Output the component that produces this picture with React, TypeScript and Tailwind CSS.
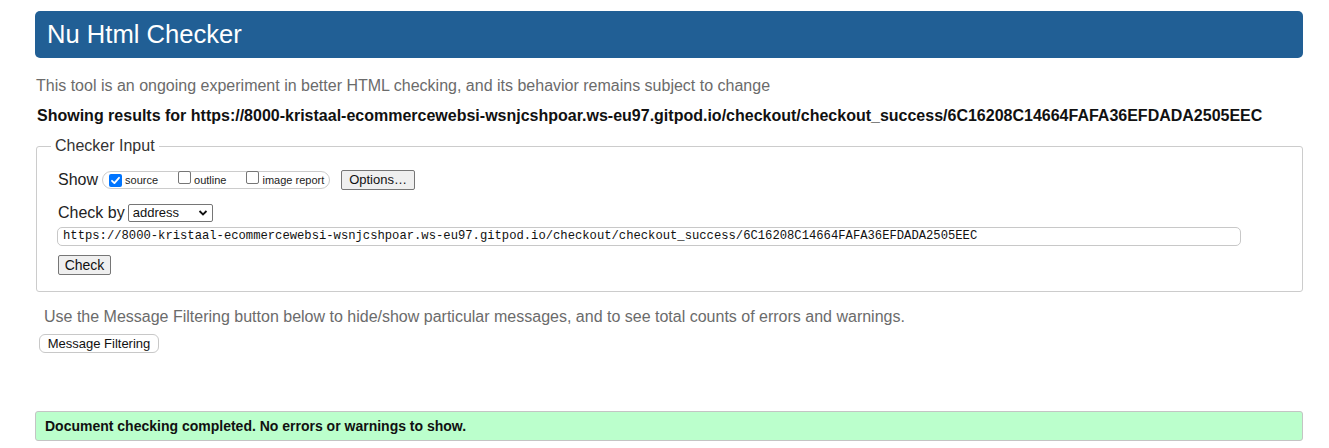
import React from "react";

const URL =
  "https://8000-kristaal-ecommercewebsi-wsnjcshpoar.ws-eu97.gitpod.io/checkout/checkout_success/6C16208C14664FAFA36EFDADA2505EEC";

function Box({ checked }: { checked?: boolean }) {
  if (checked) {
    return (
      <span className="inline-flex h-[13px] w-[13px] items-center justify-center rounded-[2px] bg-[#0075ff]">
        <svg width="11" height="11" viewBox="0 0 11 11">
          <path d="M2 5.8 L4.4 8.1 L9 2.8" fill="none" stroke="#fff" strokeWidth="1.8" strokeLinecap="round" strokeLinejoin="round" />
        </svg>
      </span>
    );
  }
  return <span className="inline-block h-[13px] w-[13px] rounded-[2px] border border-[#767676] bg-white" />;
}

export default function App() {
  return (
    <div className="min-h-[448px] bg-white font-['Liberation_Sans',Arial,sans-serif] text-[#222]">
      <div className="ml-[35px] w-[1268px] pt-[11px]">
        <div className="flex h-[47px] items-center rounded-[5px] bg-[#215f95] pl-[12px]">
          <h1 className="text-[25.6px] leading-none text-white">Nu Html Checker</h1>
        </div>
        <p className="mt-[18px] pl-[1px] text-[16px] leading-[20px] text-[#6b6b6b]">
          This tool is an ongoing experiment in better HTML checking, and its behavior remains subject to change
        </p>
        <p className="mt-[10px] pl-[2px] text-[16px] font-bold leading-[20px] text-[#111]">
          Showing results for {URL}
        </p>
        <fieldset className="mt-[10px] ml-[1px] rounded-[3px] border border-[#cccccc] px-0 pb-[16px]">
          <legend className="ml-[14px] px-[4px] text-[16px] leading-[20px] text-[#333]">Checker Input</legend>
          <div className="pl-[21px]">
            <div className="mt-[14px] flex h-[20px] items-center">
              <span className="text-[16px] text-[#222]">Show</span>
              <div className="ml-[4px] flex h-[18px] w-[228px] items-center rounded-full border border-[#cccccc] pl-[6px] text-[11px] text-[#222]">
                <Box checked />
                <span className="ml-[3px]">source</span>
                <span className="ml-[20px]"><Box /></span>
                <span className="ml-[3px]">outline</span>
                <span className="ml-[20px]"><Box /></span>
                <span className="ml-[3px]">image report</span>
              </div>
              <button className="ml-[11px] flex h-[20px] w-[74px] items-center justify-center rounded-[2px] border border-[#767676] bg-[#efefef] text-[13px] text-[#111]">
                Options…
              </button>
            </div>
            <div className="mt-[13px] flex h-[20px] items-center">
              <span className="text-[16px] text-[#222]">Check by</span>
              <div className="ml-[3px] flex h-[18px] w-[85px] items-center justify-between rounded-[2px] border border-[#767676] bg-white pl-[4px] pr-[4px] text-[13px] text-[#111]">
                <span>address</span>
                <svg width="10" height="8" viewBox="0 0 10 8">
                  <path d="M1.5 2 L5 5.5 L8.5 2" fill="none" stroke="#111" strokeWidth="1.8" />
                </svg>
              </div>
            </div>
            <div className="mt-[4px] -ml-[1px] flex h-[19px] w-[1184px] items-center rounded-[5px] border border-[#c8c8c8] pl-[5px] font-['Liberation_Mono',monospace] text-[12.2px] text-[#111]">
              {URL}
            </div>
            <button className="mt-[9px] flex h-[20px] w-[53px] items-center justify-center rounded-[2px] border border-[#767676] bg-[#efefef] text-[14px] text-[#111]">
              Check
            </button>
          </div>
        </fieldset>
        <p className="mt-[15px] pl-[9px] text-[16px] leading-[20px] text-[#6b6b6b]">
          Use the Message Filtering button below to hide/show particular messages, and to see total counts of errors and warnings.
        </p>
        <button className="mt-[7px] ml-[4px] flex h-[19px] w-[120px] items-center justify-center rounded-[6px] border border-[#c8c8c8] bg-white text-[13px] text-[#111]">
          Message Filtering
        </button>
        <div className="mt-[58px] flex h-[30px] items-center rounded-[3px] border border-[#c4c4c4] bg-[#bbffcc] pl-[9px] text-[14px] font-bold text-[#111]">
          Document checking completed. No errors or warnings to show.
        </div>
      </div>
    </div>
  );
}
